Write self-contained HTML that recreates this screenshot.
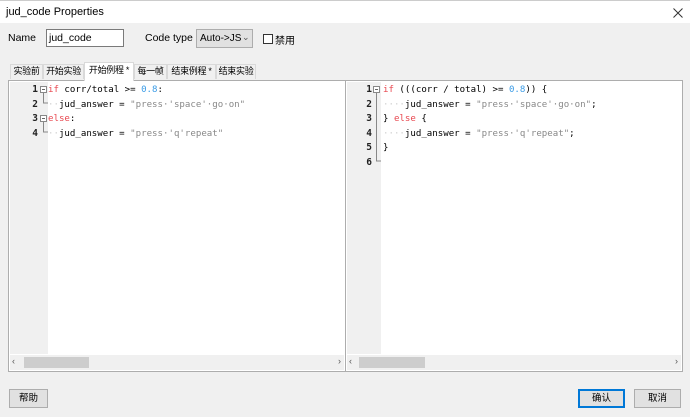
<!DOCTYPE html>
<html><head><meta charset="utf-8"><style>
*{margin:0;padding:0;box-sizing:border-box}
body{width:690px;height:417px;background:#f0f0f0;position:relative;overflow:hidden;font-family:"Liberation Sans","Noto Sans CJK SC",sans-serif;font-size:10.5px;color:#000}
.abs{position:absolute;white-space:nowrap}
.title{left:0;top:0;width:690px;height:23px;background:#fff;border-top:1px solid #ccc}
.title span{position:absolute;left:6px;top:5px;font-size:11px}
.inp{background:#fff;border:1px solid #7a7a7a}
.tab{top:64px;height:15px;border:1px solid #d9d9d9;border-bottom:none;font-size:9px;line-height:13px;text-align:center;background:#f0f0f0;letter-spacing:-0.3px}
.pane{top:80px;height:292px;border:1px solid #adadad;background:#fff}
.gut{position:absolute;left:1px;top:1px;bottom:17px;background:#f0f0f0}
.code{position:absolute;font-family:"DejaVu Sans Mono",monospace;font-size:9.1px;line-height:14.5px;white-space:pre;color:#000}
.num{position:absolute;font-family:"DejaVu Sans Mono",monospace;font-size:9.5px;font-weight:bold;line-height:14.5px;text-align:right;color:#222}
.k{color:#e8474f}.n{color:#3a9be6}.s{color:#888}.d{color:#ccc}
.sb{position:absolute;left:1px;right:1px;bottom:1px;height:15px;background:#f0f0f0}
.sb .th{position:absolute;left:14px;top:2px;width:65px;height:11px;background:#cdcdcd}
.sb .l,.sb .r{position:absolute;top:1px;font-size:9px;color:#555}
.btn{top:389px;height:19px;border:1px solid #adadad;background:#e1e1e1;font-size:9.5px;line-height:17px;text-align:center}
</style></head><body>
<div class="abs title"><span>jud_code Properties</span>
<svg class="abs" style="left:673px;top:7px" width="10" height="10"><path d="M0.5 0.5L9.5 9.5M9.5 0.5L0.5 9.5" stroke="#333" stroke-width="1"/></svg></div>
<div class="abs" style="left:8px;top:32px">Name</div>
<div class="abs inp" style="left:46px;top:29px;width:78px;height:18px"><span style="position:absolute;left:2px;top:2px">jud_code</span></div>
<div class="abs" style="left:145px;top:32px">Code type</div>
<div class="abs" style="left:196px;top:29px;width:57px;height:19px;background:#e1e1e1;border:1px solid #adadad"><span style="position:absolute;left:3px;top:3px;font-size:10px">Auto-&gt;JS</span><span style="position:absolute;left:45px;top:2px;font-size:9px;color:#555">&#8964;</span></div>
<div class="abs" style="left:263px;top:34px;width:10px;height:10px;border:1px solid #333;background:#fff"></div>
<div class="abs" style="left:275px;top:32px;font-size:10px">禁用</div>

<div class="abs tab" style="left:10px;width:33px">实验前</div>
<div class="abs tab" style="left:43px;width:41px">开始实验</div>
<div class="abs tab" style="left:84px;width:50px;top:62px;height:19px;background:#fff;z-index:2;line-height:15px">开始例程 *</div>
<div class="abs tab" style="left:134px;width:33px">每一帧</div>
<div class="abs tab" style="left:167px;width:49px">结束例程 *</div>
<div class="abs tab" style="left:216px;width:40px">结束实验</div>

<div class="abs pane" style="left:8px;width:338px">
<div class="gut" style="width:38px"></div>
<div class="num" style="left:10px;top:2px;width:19px">1<br>2<br>3<br>4</div>
<svg class="abs" style="left:30px;top:0" width="10" height="70"><rect x="1.5" y="5.5" width="6" height="6" fill="#fff" stroke="#888"/><path d="M3 8.5H6" stroke="#666"/><path d="M4.5 12V22H9" stroke="#888" fill="none"/><rect x="1.5" y="34.5" width="6" height="6" fill="#fff" stroke="#888"/><path d="M3 37.5H6" stroke="#666"/><path d="M4.5 41V51H9" stroke="#888" fill="none"/></svg>
<div class="code" style="left:39px;top:2px"><span class="k">if</span> corr/total &gt;= <span class="n">0.8</span>:
<span class="d">··</span>jud_answer = <span class="s">"press·'space'·go·on"</span>
<span class="k">else</span>:
<span class="d">··</span>jud_answer = <span class="s">"press·'q'repeat"</span></div>
<div class="sb"><span class="l" style="left:2px">&lsaquo;</span><div class="th"></div><span class="r" style="right:3px">&rsaquo;</span></div>
</div>

<div class="abs pane" style="left:345px;width:338px">
<div class="gut" style="width:34px"></div>
<div class="num" style="left:8px;top:2px;width:18px">1<br>2<br>3<br>4<br>5<br>6</div>
<svg class="abs" style="left:26px;top:0" width="10" height="100"><rect x="1.5" y="5.5" width="6" height="6" fill="#fff" stroke="#888"/><path d="M3 8.5H6" stroke="#666"/><path d="M4.5 12V80H9" stroke="#888" fill="none"/></svg>
<div class="code" style="left:37px;top:2px"><span class="k">if</span> (((corr / total) &gt;= <span class="n">0.8</span>)) {
<span class="d">····</span>jud_answer = <span class="s">"press·'space'·go·on"</span>;
} <span class="k">else</span> {
<span class="d">····</span>jud_answer = <span class="s">"press·'q'repeat"</span>;
}
</div>
<div class="sb"><span class="l" style="left:2px">&lsaquo;</span><div class="th" style="left:12px;width:66px"></div><span class="r" style="right:3px">&rsaquo;</span></div>
</div>

<div class="abs btn" style="left:9px;width:39px">帮助</div>
<div class="abs btn" style="left:578px;width:47px;border:1px solid #0078d7;box-shadow:inset 0 0 0 1px #0078d7">确认</div>
<div class="abs btn" style="left:634px;width:47px">取消</div>
</body></html>
